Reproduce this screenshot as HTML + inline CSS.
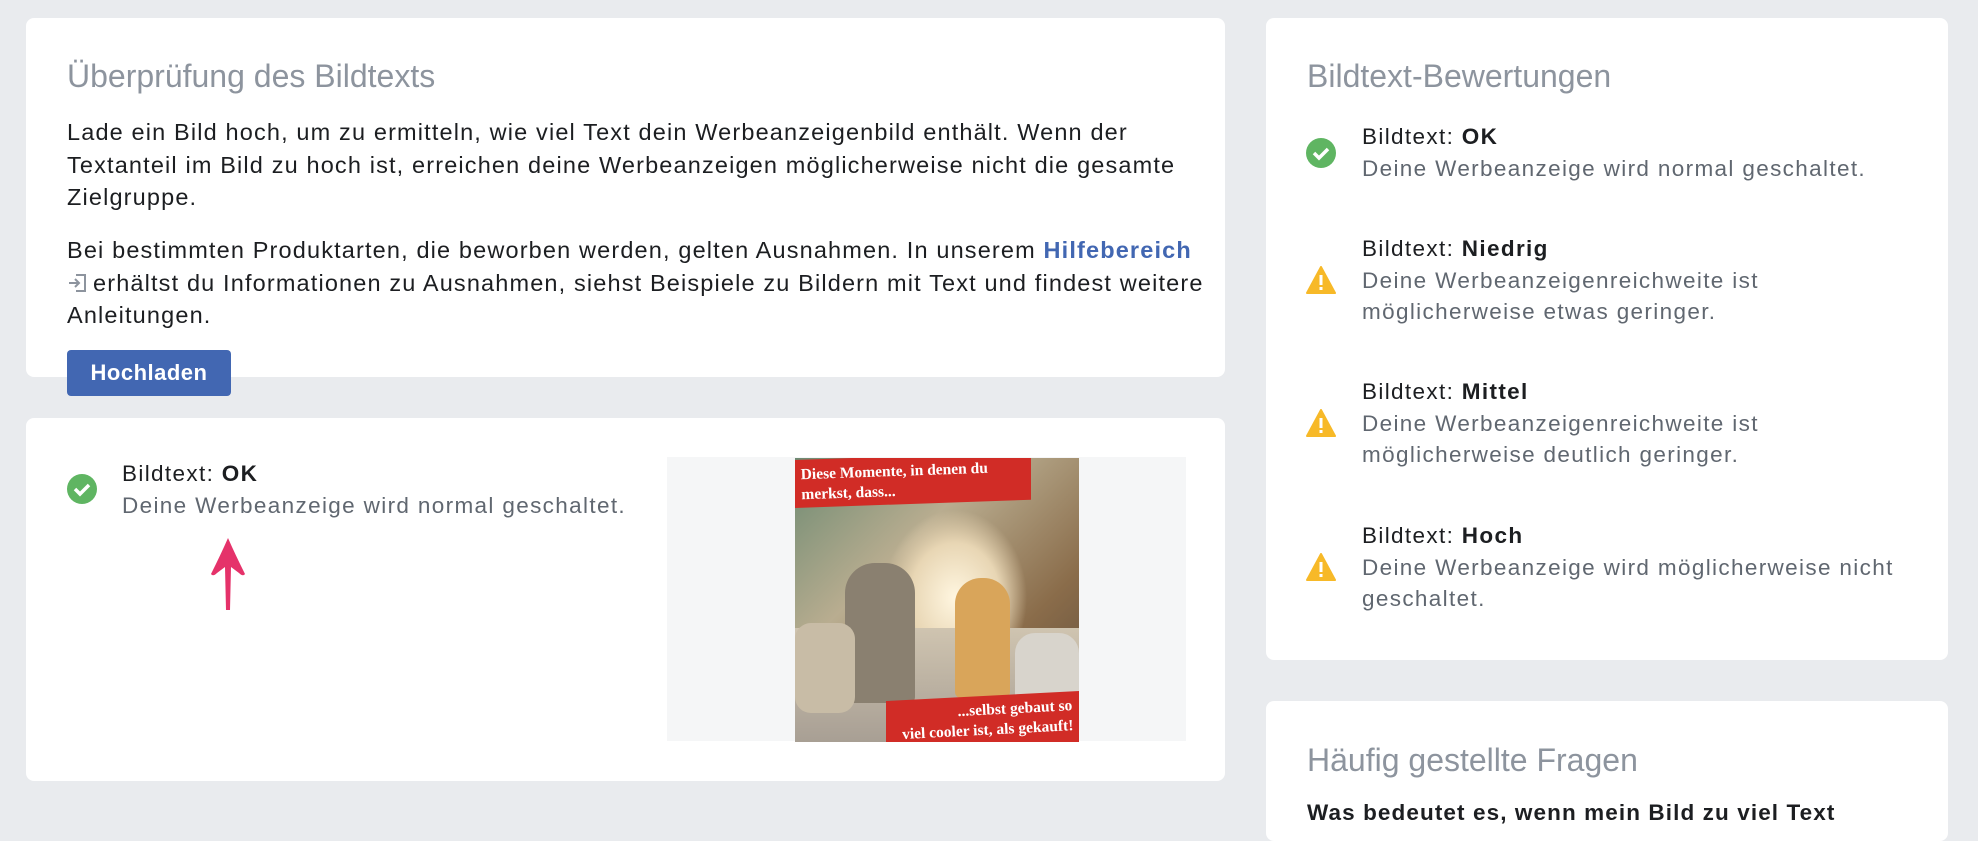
<!DOCTYPE html>
<html><head><meta charset="utf-8"><style>
*{margin:0;padding:0;box-sizing:border-box}
body{width:1978px;height:818px;background:#e9ebee;font-family:"Liberation Sans",sans-serif;position:relative;overflow:hidden;color:#1c1e21}
.card{position:absolute;background:#fff;border-radius:8px}
.abs{position:absolute;white-space:nowrap}
.title{font-size:32px;color:#8d949e}
.body{font-size:23.5px;line-height:32.5px;color:#1c1e21;letter-spacing:1.15px}
.g{color:#606770}
.item{font-size:22.5px;line-height:31.5px;letter-spacing:1.35px}
</style></head><body>
<div class="card" style="left:26px;top:18px;width:1199px;height:359px"></div>
<div class="abs title" style="left:67px;top:58px">Überprüfung des Bildtexts</div>
<div class="abs body" style="left:67px;top:116px">Lade ein Bild hoch, um zu ermitteln, wie viel Text dein Werbeanzeigenbild enthält. Wenn der<br>Textanteil im Bild zu hoch ist, erreichen deine Werbeanzeigen möglicherweise nicht die gesamte<br>Zielgruppe.</div>
<div class="abs body" style="left:67px;top:234px">Bei bestimmten Produktarten, die beworben werden, gelten Ausnahmen. In unserem <b style="color:#4267b2">Hilfebereich</b><br><span style="display:inline-block;width:26px;height:22px;vertical-align:-3px"><svg width="22" height="22" viewBox="0 0 22 22"><path d="M9 3h9v16H9M2 11h10M8 7l4 4-4 4" fill="none" stroke="#8d949e" stroke-width="2"/></svg></span>erhältst du Informationen zu Ausnahmen, siehst Beispiele zu Bildern mit Text und findest weitere<br>Anleitungen.</div>
<div class="abs" style="left:67px;top:350px;width:164px;height:46px;background:#4267b2;border-radius:4px;color:#fff;font-weight:bold;font-size:22px;line-height:46px;text-align:center;letter-spacing:0.5px">Hochladen</div>

<div class="card" style="left:26px;top:418px;width:1199px;height:363px"></div>
<svg class="abs" style="left:67px;top:474px" width="30" height="30" viewBox="0 0 30 30"><circle cx="15" cy="15" r="15" fill="#5fb562"/><path d="M8 15l5 5 9-9" fill="none" stroke="#fff" stroke-width="3.5"/></svg>
<div class="abs item" style="left:122px;top:458px">Bildtext: <b>OK</b><br><span class="g">Deine Werbeanzeige wird normal geschaltet.</span></div>
<svg class="abs" style="left:208px;top:536px" width="40" height="76" viewBox="0 0 40 76"><path d="M20 2Q13 18 3 38q2 3 6-1l8-6 1 43h4l1-43 8 6q4 4 6 1Q27 18 20 2z" fill="#e5326a"/></svg>
<div class="abs" style="left:667px;top:457px;width:519px;height:284px;background:#f5f6f7"></div>
<div class="abs" style="left:795px;top:458px;width:284px;height:284px;overflow:hidden;background:radial-gradient(ellipse 90px 110px at 160px 140px,#fff6e0,#e8d6b4 50%,transparent 80%),linear-gradient(135deg,#6d8a72 0%,#b9ad90 35%,#8a6c4a 70%,#5a4a3a 100%)">
 <div class="abs" style="left:0;top:170px;width:284px;height:114px;background:linear-gradient(#cfc4b0,#a89f94)"></div>
 <div class="abs" style="left:50px;top:105px;width:70px;height:140px;background:#8a8070;border-radius:30px 30px 6px 6px"></div>
 <div class="abs" style="left:160px;top:120px;width:55px;height:120px;background:#d9a55a;border-radius:26px 26px 6px 6px"></div>
 <div class="abs" style="left:220px;top:175px;width:64px;height:80px;background:#d8d4cc;border-radius:20px"></div>
 <div class="abs" style="left:0;top:165px;width:60px;height:90px;background:#c8bca6;border-radius:16px"></div>
 <div class="abs" style="left:0;top:2px;width:236px;height:48px;background:#d12c26;transform:skewY(-2deg);transform-origin:0 0"></div>
 <div class="abs" style="left:6px;top:4px;color:#fff;font-family:'Liberation Serif',serif;font-weight:bold;font-size:15.5px;line-height:20px;transform:rotate(-2deg)">Diese Momente, in denen du<br>merkst, dass...</div>
 <div class="abs" style="left:91px;top:238px;width:193px;height:60px;background:#d12c26;transform:skewY(-3deg)"></div>
 <div class="abs" style="left:92px;top:243px;width:186px;text-align:right;color:#fff;font-family:'Liberation Serif',serif;font-weight:bold;font-size:15.5px;line-height:20px;transform:rotate(-3deg)">...selbst gebaut so<br>viel cooler ist, als gekauft!</div>
</div>

<div class="card" style="left:1266px;top:18px;width:682px;height:642px"></div>
<div class="abs title" style="left:1307px;top:58px">Bildtext-Bewertungen</div>
<svg class="abs" style="left:1306px;top:138px" width="30" height="30" viewBox="0 0 30 30"><circle cx="15" cy="15" r="15" fill="#5fb562"/><path d="M8 15l5 5 9-9" fill="none" stroke="#fff" stroke-width="3.5"/></svg>
<div class="abs item" style="left:1362px;top:121px">Bildtext: <b>OK</b><br><span class="g">Deine Werbeanzeige wird normal geschaltet.</span></div>
<svg class="abs" style="left:1306px;top:266px" width="30" height="28" viewBox="0 0 30 28"><path d="M15 1L29 27H1z" fill="#f7b928" stroke="#f7b928" stroke-linejoin="round" stroke-width="2"/><path d="M15 9v10M15 21v3" stroke="#fff" stroke-width="3"/></svg>
<div class="abs item" style="left:1362px;top:233px">Bildtext: <b>Niedrig</b><br><span class="g">Deine Werbeanzeigenreichweite ist<br>möglicherweise etwas geringer.</span></div>
<svg class="abs" style="left:1306px;top:409px" width="30" height="28" viewBox="0 0 30 28"><path d="M15 1L29 27H1z" fill="#f7b928" stroke="#f7b928" stroke-linejoin="round" stroke-width="2"/><path d="M15 9v10M15 21v3" stroke="#fff" stroke-width="3"/></svg>
<div class="abs item" style="left:1362px;top:376px">Bildtext: <b>Mittel</b><br><span class="g">Deine Werbeanzeigenreichweite ist<br>möglicherweise deutlich geringer.</span></div>
<svg class="abs" style="left:1306px;top:553px" width="30" height="28" viewBox="0 0 30 28"><path d="M15 1L29 27H1z" fill="#f7b928" stroke="#f7b928" stroke-linejoin="round" stroke-width="2"/><path d="M15 9v10M15 21v3" stroke="#fff" stroke-width="3"/></svg>
<div class="abs item" style="left:1362px;top:520px">Bildtext: <b>Hoch</b><br><span class="g">Deine Werbeanzeige wird möglicherweise nicht<br>geschaltet.</span></div>

<div class="card" style="left:1266px;top:701px;width:682px;height:140px"></div>
<div class="abs title" style="left:1307px;top:742px">Häufig gestellte Fragen</div>
<div class="abs" style="left:1307px;top:800px;font-size:22.5px;font-weight:bold;letter-spacing:1.1px">Was bedeutet es, wenn mein Bild zu viel Text</div>
</body></html>
